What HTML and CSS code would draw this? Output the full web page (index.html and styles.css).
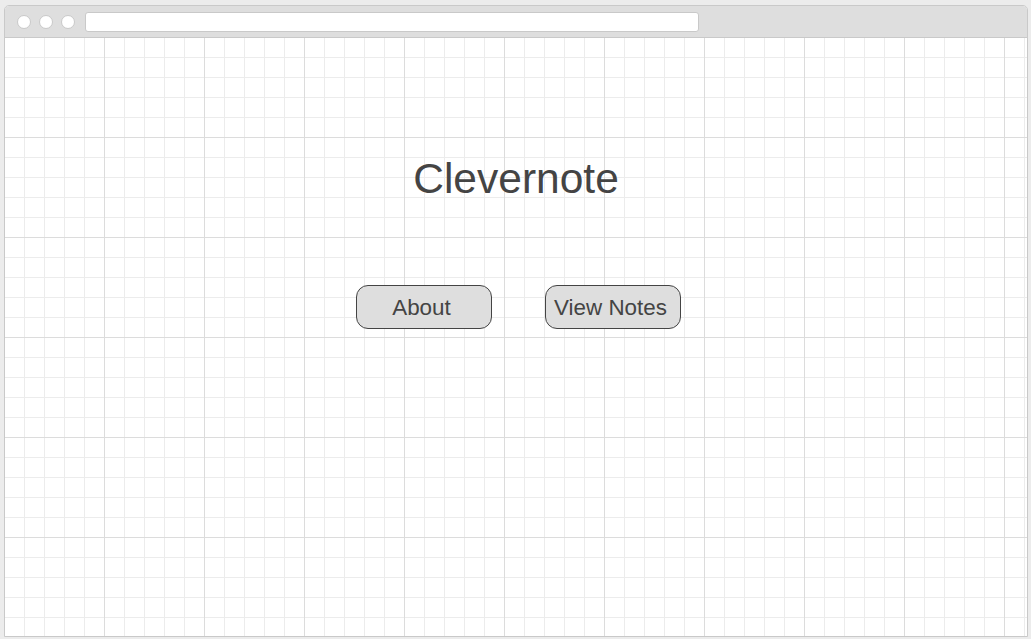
FILE: index.html
```html
<!DOCTYPE html>
<html>
<head>
<meta charset="utf-8">
<link rel="stylesheet" href="styles.css">
</head>
<body>
<div class="window">
  <div class="titlebar">
    <span class="dot"></span><span class="dot"></span><span class="dot"></span>
    <div class="address"></div>
  </div>
  <div class="canvas">
    <h1 class="title">Clevernote</h1>
    <div class="actions">
      <button class="btn">About</button>
      <button class="btn">View Notes</button>
    </div>
  </div>
</div>
</body>
</html>
```
FILE: styles.css
```css
html, body { margin: 0; padding: 0; }
body {
  background: #ececec;
  width: 1031px;
  height: 639px;
  overflow: hidden;
  font-family: "Liberation Sans", Arial, sans-serif;
}
.window {
  margin: 5px 0 0 4px;
  width: 1022px;
  height: 630px;
  border: 1px solid #c9c9c9;
  border-radius: 5px 5px 0 0;
  display: flex;
  flex-direction: column;
  overflow: hidden;
  background: #fff;
}
.titlebar {
  height: 31px;
  background: #dedede;
  border-bottom: 1px solid #c9c9c9;
  display: flex;
  align-items: center;
  padding-left: 12px;
  box-sizing: content-box;
}
.dot {
  width: 12px;
  height: 12px;
  border-radius: 50%;
  background: #fff;
  border: 1px solid #c9c9c9;
  margin-right: 8px;
}
.address {
  margin-left: 2px;
  width: 612px;
  height: 18px;
  background: #fff;
  border: 1px solid #c9c9c9;
  border-radius: 3px;
}
.canvas {
  flex: 1;
  background-color: #fff;
  background-image:
    linear-gradient(to right, #dcdcdc 1px, transparent 1px),
    linear-gradient(to bottom, #dcdcdc 1px, transparent 1px),
    linear-gradient(to right, #ececec 1px, transparent 1px),
    linear-gradient(to bottom, #ececec 1px, transparent 1px);
  background-size: 100px 100px, 100px 100px, 20px 20px, 20px 20px;
  background-position: -1px -1px;
  display: flex;
  flex-direction: column;
  align-items: center;
}
.title {
  margin: 120px 0 0 0;
  font-size: 42.5px;
  line-height: 42px;
  font-weight: normal;
  color: #444;
}
.actions {
  margin-top: 85px;
  display: flex;
  gap: 53px;
  padding-left: 5px;
}
.btn {
  width: 136px;
  height: 44px;
  border: 1px solid #444;
  border-radius: 12px;
  background: #dedede;
  color: #444;
  font-family: "Liberation Sans", Arial, sans-serif;
  font-size: 22.4px;
  padding: 2px 5px 0 0;
}
```
